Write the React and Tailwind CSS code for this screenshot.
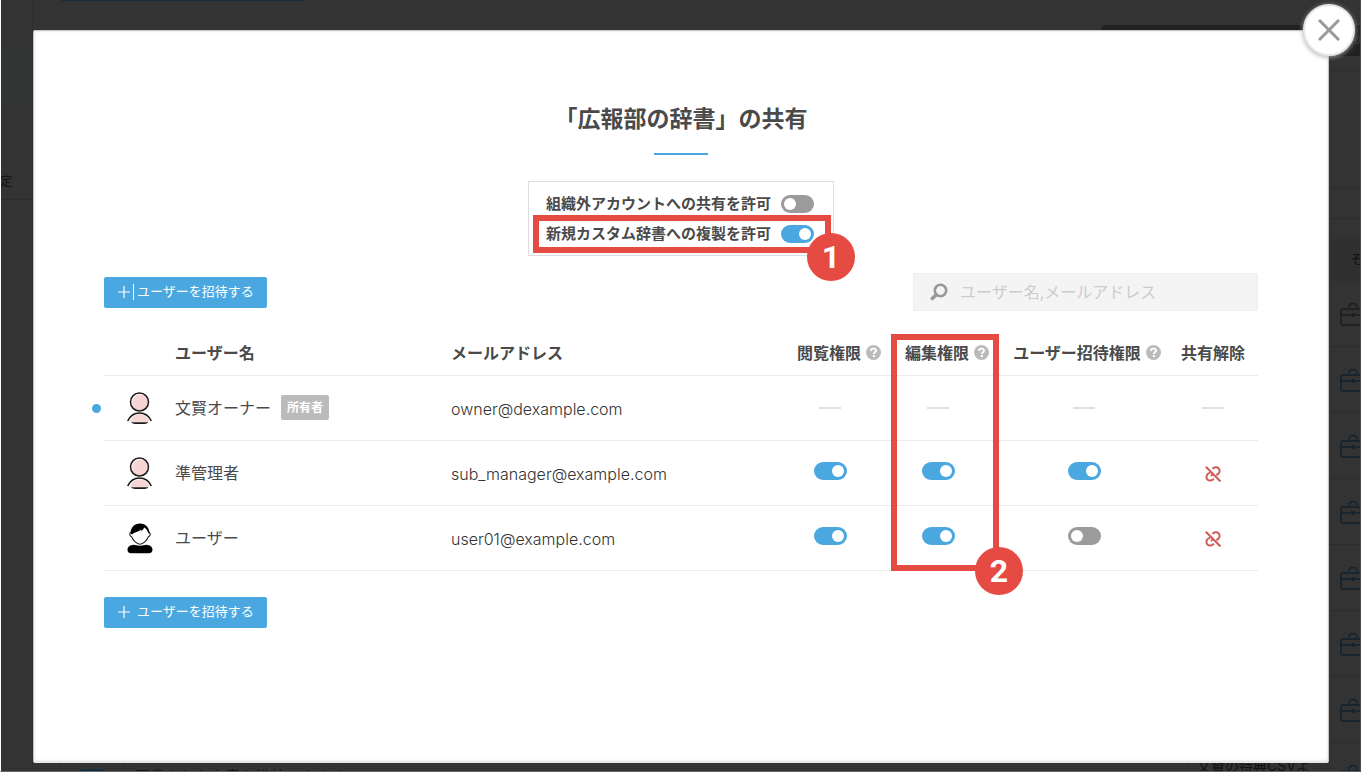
import React from "react";

const users = [
  {
    name: "文賢オーナー",
    email: "owner@dexample.com",
    avatar: "manager",
    owner: true,
  },
  {
    name: "準管理者",
    email: "sub_manager@example.com",
    avatar: "manager",
    view: true,
    edit: true,
    invite: true,
  },
  {
    name: "ユーザー",
    email: "user01@example.com",
    avatar: "user",
    view: true,
    edit: true,
    invite: false,
  },
];

function Toggle({ label, id, on }) {
  return (
    <input
      id={id}
      type="checkbox"
      role="switch"
      aria-label={label}
      defaultChecked={on}
      className="relative block h-[18px] w-[33px] shrink-0 cursor-pointer appearance-none rounded-full bg-[#9b9b9b] before:absolute before:top-[3px] before:left-[3px] before:size-3 before:rounded-full before:bg-white checked:bg-[#4ba7df] checked:before:left-[18px]"
    />
  );
}

function HelpIcon() {
  return (
    <svg viewBox="0 0 16 16" className="size-[15px] shrink-0">
      <circle cx="8" cy="8" r="8" fill="#bbbbbb" />
      <path
        d="M5.300 6.300c0-1.700 1.200-2.500 2.700-2.500s2.700.9 2.700 2.300c0 1.700-2.300 1.700-2.300 3.400"
        fill="none"
        stroke="#fff"
        strokeWidth="2"
      />
      <rect x="7.300" y="10.700" width="2.200" height="2.200" fill="#fff" />
    </svg>
  );
}

function ManagerAvatar() {
  return (
    <svg viewBox="0 0 28 34" className="h-[34px] w-7">
      <circle cx="14" cy="11.500" r="8" fill="#f8d5d5" />
      <circle cx="13.500" cy="11" r="9" fill="none" stroke="#1a1a1a" strokeWidth="1.500" />
      <path d="M4 31c1.500-5 5-7.500 9.500-7.500s8.500 2.500 10 7.500z" fill="#f8d5d5" />
      <path d="M1.700 30c2.300-4.900 6.500-8 11.800-8s9.500 3.100 11.800 8" fill="none" stroke="#1a1a1a" strokeWidth="1.600" />
      <path d="M5 31.300h17.500c-1 1.200-2.500 1.700-4 1.700h-9.500c-1.500 0-3-.5-4-1.700z" fill="#1a1a1a" />
    </svg>
  );
}

function UserAvatar() {
  return (
    <svg viewBox="0 0 28 34" className="h-[34px] w-7">
      <path
        d="M5 11.500c-1.200.3-1.500 1.500-1 2.700.3.900.8 1.400 1.600 1.600 1.500 3.800 5.200 7.400 8.400 7.400s6.900-3.600 8.400-7.400c.8-.2 1.300-.7 1.600-1.600.5-1.200.2-2.400-1-2.700"
        fill="#fff"
        stroke="#222"
        strokeWidth="1.100"
      />
      <path d="M4.500 12.500c0-6 4-10 9.500-10s9.500 4 9.500 10l-1.300-.5c-.6-2.500-2-4.500-4-5.500-.4 1.500-2 3-3.500 3.500l.4-1.800c-1.800 2.500-4.500 2.300-7.100 3.800-1 .4-1.600 1-1.900 1.500z" fill="#000" />
      <path d="M7.500 23.800c2 .2 3.600 1 6.500 1s4.500-.8 6.500-1c3 .2 6 1.900 6 4.900 0 2.500-1.500 3.500-4 3.500h-17c-2.500 0-4-1-4-3.500 0-3 3-4.700 6-4.900z" fill="#000" />
    </svg>
  );
}

function UnlinkIcon() {
  return (
    <svg
      viewBox="0 0 16 16"
      className="size-4"
      fill="none"
      stroke="#d05c58"
      strokeWidth="2"
    >
      <path d="M7.500 2.900c1.500-1.700 4.400-2.200 6-.6s1.500 3.900-.2 5.600l-2 1.200" />
      <path d="M8.900 12.700c-1.600 1.900-4.500 2.500-6.200 1s-1.700-4.100 0-5.700l2.400-1.500" />
      <path d="M6 10l2.500-2.500" />
      <path d="M.8 .8l14.600 14.600" />
    </svg>
  );
}

function Briefcase({ color }) {
  return (
    <svg viewBox="0 0 26 24" className="h-6 w-[26px] shrink-0" fill="none" stroke={color} strokeWidth="1.500">
      <rect x="1" y="7" width="24" height="16" rx="2" />
      <path d="M9 5.500c0-2.500 1.500-4 4-4s4 1.500 4 4" />
      <path d="M1 13h9.500M15.500 13h9.500" />
      <rect x="12" y="12" width="2" height="2" fill={color} />
    </svg>
  );
}

function Marker({ number, className }) {
  return (
    <span
      className={`absolute -right-[30px] flex size-12 items-center justify-center rounded-full bg-[#e54b43] font-['Roboto',sans-serif] text-[32px] leading-none font-bold text-white ${className}`}
    >
      {number}
    </span>
  );
}

function InviteButton({ divider }) {
  return (
    <button
      type="button"
      className="flex h-[31px] w-[163px] items-center rounded-xs bg-[#4ba7df] pl-3.5 text-[13px] text-white"
    >
      <svg viewBox="0 0 12 12" className="size-3" stroke="#fff" strokeWidth="1.200">
        <path d="M6 0v12M0 6h12" />
      </svg>
      <span className={divider ? "ml-[3px] h-4 w-px bg-white" : "ml-[3px] h-4 w-px"} />
      <span className="ml-[3px]">ユーザーを招待する</span>
    </button>
  );
}

function PermissionCell({ user, value, label, className }) {
  return (
    <td className={className}>
      {user.owner ? (
        <div className="mx-auto h-0.5 w-[22px] bg-[#e0e0e0]" />
      ) : (
        <div className="flex justify-center pb-1">
          <Toggle label={`${user.name} ${label}`} on={value} />
        </div>
      )}
    </td>
  );
}

// Dimmed page behind the dialog
function Backdrop() {
  return (
    <div
      aria-hidden="true"
      className="absolute inset-0 flex overflow-hidden border-r border-b border-l border-r-[#4c4c4c] border-b-[#666666] border-l-white bg-[#333333] text-[#111111]"
    >
      <div className="w-8 shrink-0 overflow-hidden border-r border-[#2e2e2e]">
        <div className="mt-12 h-14 bg-[#323534]" />
        <div className="flex h-24 items-center border-b border-[#2c2c2c] pt-[60px] text-[12px]">
          <span className="-ml-px">定</span>
        </div>
      </div>
      <div className="flex min-w-0 flex-1 flex-col overflow-hidden *:shrink-0">
        <div className="ml-7 h-px w-[244px] bg-[#1b2a35]" />
        <div className="mt-6 ml-auto flex h-[31px] w-[259px] items-center justify-end overflow-hidden rounded-tl-sm bg-[#222222]">
          <span className="w-1.5 text-[12px] text-[#3a3a3a]">の</span>
        </div>
        <div className="h-[15px] border-b border-[#2c2c2c]" />
        <div className="h-[118px] border-b border-[#2c2c2c]" />
        <div className="h-[30px] border-b border-[#2c2c2c]" />
        <div className="h-5" />
        <div className="flex h-[42px] items-center justify-end overflow-hidden bg-[#2f2f2f]">
          <span className="w-2.5 text-[13px]">そ</span>
        </div>
        {["#1c1c1c", "#12222e", "#12222e", "#12222e", "#12222e", "#12222e", "#12222e"].map((color, i) => (
          <div key={i} className="flex h-[66px] items-center justify-end border-b border-[#2c2c2c]">
            <div className="w-5 overflow-hidden">
              <Briefcase color={color} />
            </div>
          </div>
        ))}
        <div className="flex h-[66px] items-start">
          <div className="ml-[26px] flex w-[66px] shrink-0 justify-center border-x border-[#2c2c2c] pt-[26px]">
            <div className="h-4 w-[30px] shrink-0 rounded-full bg-[#12303f]" />
          </div>
          <div className="flex-1 pt-[23px] pl-2.5 text-[15px]">下書きした文章を推敲できます</div>
          <div className="w-[138px] border-l border-[#2c2c2c] pt-3 pl-2 text-[14px] whitespace-nowrap">
            文賢の特典CSVよ
          </div>
          <div className="w-[34px] shrink-0 overflow-hidden pt-[21px] pl-3.5">
            <Briefcase color="#12222e" />
          </div>
        </div>
      </div>
    </div>
  );
}

function App() {
  return (
    <div
      lang="ja"
      className="relative min-h-screen overflow-hidden pt-[30px] pr-8 pb-[9px] pl-[33px] font-[Inter,'Noto_Sans_CJK_JP',sans-serif]"
    >
      <Backdrop />

      {/* Dialog */}
      <div
        role="dialog"
        aria-labelledby="share-title"
        className="relative min-h-[calc(100vh-39px)] rounded-xs border border-b-2 border-[#c4c4c4] border-b-[#e8e8e8] bg-white px-[70px] pt-[71px] pb-12 text-[#4a4a4a] shadow-[inset_0_0_3px_#dddddd]"
      >
        <button
          type="button"
          aria-label="閉じる"
          className="absolute -top-[27px] -right-[27px] flex size-[52px] items-center justify-center rounded-full border-2 border-[#e6e6e6] bg-white shadow-[0_1px_5px_#aaaaaa]"
        >
          <svg viewBox="0 0 22 22" className="size-[22px]" stroke="#999999" strokeWidth="3">
            <path d="M1 1l20 20M21 1L1 21" />
          </svg>
        </button>

        {/* Title */}
        <h1 id="share-title" className="text-center text-[23px] leading-[34px] font-bold">
          「広報部の辞書」の共有
        </h1>
        <div className="mx-auto mt-[17px] h-0.5 w-[54px] bg-[#4ba7df]" />

        {/* Sharing options */}
        <div className="relative mx-auto mt-[26px] flex h-[75px] w-[306px] flex-col gap-3 border border-[#dddddd] pt-[13px] pl-[17px] text-[15px] leading-[18px] font-bold">
          <div className="flex items-center gap-2.5">
            <label htmlFor="allow-external">組織外アカウントへの共有を許可</label>
            <Toggle id="allow-external" label="組織外アカウントへの共有を許可" on={false} />
          </div>
          <div className="flex items-center gap-2.5">
            <label htmlFor="allow-copy">新規カスタム辞書への複製を許可</label>
            <Toggle id="allow-copy" label="新規カスタム辞書への複製を許可" on={true} />
          </div>
          <div className="pointer-events-none absolute top-[33px] right-0.5 left-1 h-[38px] border-[6px] border-[#e54b43]">
            <Marker number="1" className="-bottom-[34px]" />
          </div>
        </div>

        {/* Toolbar */}
        <div className="mt-[17px] flex items-center justify-between">
          <InviteButton divider />
          <div className="relative">
            <svg
              viewBox="0 0 18 18"
              className="absolute top-2.5 left-[17px] size-[18px]"
              fill="none"
              stroke="#999999"
            >
              <circle cx="10.500" cy="7.500" r="5.700" strokeWidth="2.600" />
              <path d="M6.300 11.700L1.200 16.500" strokeWidth="3.400" />
            </svg>
            <input
              type="search"
              aria-label="ユーザー検索"
              placeholder="ユーザー名,メールアドレス"
              className="block h-[38px] w-[345px] rounded-xs border border-[#eeeeee] bg-[#f4f4f4] pl-[46px] text-base placeholder:text-[#cccccc] focus:outline-none"
            />
          </div>
        </div>

        {/* Users */}
        <div className="relative mt-[18px]">
          <table className="w-full table-fixed border-collapse text-left">
            <colgroup>
              <col className="w-[71px]" />
              <col className="w-[276px]" />
              <col />
              <col className="w-[108px]" />
              <col className="w-[108px]" />
              <col className="w-[172px]" />
              <col className="w-[85px]" />
            </colgroup>
            <thead>
              <tr className="h-[46px] border-b border-[#ebebeb] *:pt-0.5 *:font-bold">
                <td></td>
                <th scope="col">ユーザー名</th>
                <th scope="col">メールアドレス</th>
                <th scope="col">
                  <div className="flex items-center justify-center gap-[5px]">
                    閲覧権限
                    <HelpIcon />
                  </div>
                </th>
                <th scope="col">
                  <div className="flex items-center justify-center gap-[5px]">
                    編集権限
                    <HelpIcon />
                  </div>
                </th>
                <th scope="col">
                  <div className="flex items-center justify-center gap-[5px]">
                    ユーザー招待権限
                    <HelpIcon />
                  </div>
                </th>
                <th scope="col" className="pl-2">共有解除</th>
              </tr>
            </thead>
            <tbody>
              {users.map((user) => (
                <tr key={user.email} className="h-[65px] border-b border-[#ebebeb]">
                  <td className="relative pl-[22px]">
                    {user.owner && (
                      <span className="absolute top-7 -left-3 size-[9px] rounded-full bg-[#4ba7df]" />
                    )}
                    {user.avatar === "manager" ? <ManagerAvatar /> : <UserAvatar />}
                  </td>
                  <td>
                    <div className="flex items-center gap-2.5">
                      {user.name}
                      {user.owner && (
                        <span className="rounded-xs bg-[#bbbbbb] px-1.5 text-[12px] leading-[25px] font-bold text-white">
                          所有者
                        </span>
                      )}
                    </div>
                  </td>
                  <td className="pt-0.5 font-light text-[#333333]">{user.email}</td>
                  <PermissionCell user={user} value={user.view} label="閲覧権限" className="pr-[18px]" />
                  <PermissionCell user={user} value={user.edit} label="編集権限" className="pr-[18px]" />
                  <PermissionCell user={user} value={user.invite} label="ユーザー招待権限" className="pr-1.5" />
                  <td className="pr-1.5">
                    {user.owner ? (
                      <div className="mx-auto h-0.5 w-[22px] bg-[#e0e0e0]" />
                    ) : (
                      <button type="button" aria-label={`${user.name} 共有解除`} className="mx-auto block cursor-pointer pt-0.5">
                        <UnlinkIcon />
                      </button>
                    )}
                  </td>
                </tr>
              ))}
            </tbody>
          </table>
          <div className="pointer-events-none absolute top-[5px] right-[259px] bottom-0 w-[108px] border-[6px] border-[#e54b43]">
            <Marker number="2" className="-bottom-[30px]" />
          </div>
        </div>

        <div className="mt-[26px]">
          <InviteButton />
        </div>
      </div>
    </div>
  );
}

export default App;
